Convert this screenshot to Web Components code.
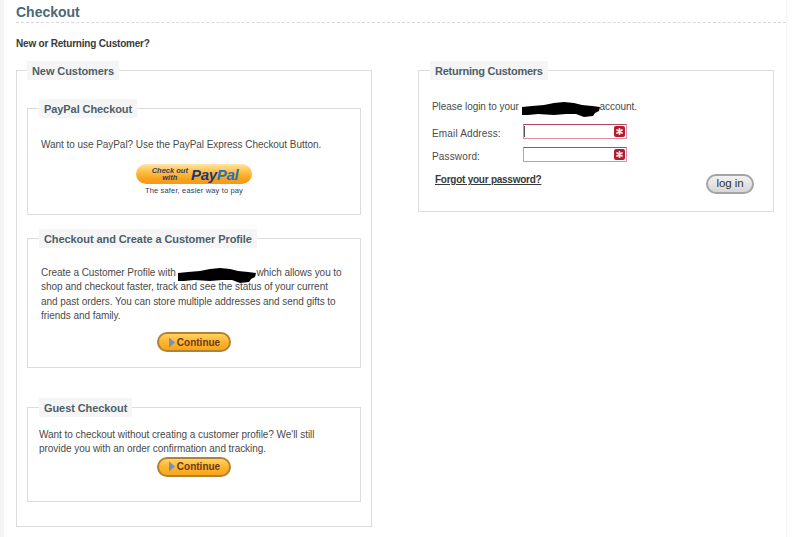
<!DOCTYPE html>
<html>
<head>
<meta charset="utf-8">
<title>Checkout</title>
<style>
html, body { margin: 0; padding: 0; background: #fff; }
body { font-family: "Liberation Sans", Arial, sans-serif; color: #4a4a4a; height: 537px; overflow: hidden; }
</style>
</head>
<body>
<checkout-page></checkout-page>

<script>
// legend box used for every group on the page
class GroupBox extends HTMLElement {
	constructor() {
		super();
		this.attachShadow({ mode: 'open' });
		this.shadowRoot.innerHTML = `
			<style>
			:host { display: block; }
			fieldset {
				margin: 0;
				min-width: 0;
				height: var(--box-height, auto);
				box-sizing: border-box;
				border: 1px solid #dcdcdc;
				padding: var(--box-padding, 0);
			}
			legend {
				margin-left: var(--legend-left, 0);
				padding: 0 5px;
				height: 19px;
				line-height: 21px;
				background: #f5f5f5;
				color: #4d6069;
				font-size: 11px;
				font-weight: bold;
				letter-spacing: var(--legend-spacing, -0.08px);
				white-space: nowrap;
			}
			</style>
			<fieldset>
				<legend part="legend"></legend>
				<slot></slot>
			</fieldset>
		`;
	}

	connectedCallback() {
		this.shadowRoot.querySelector('legend').textContent = this.getAttribute('label');
	}
}

// black marker scribble over the shop name
class RedactBlob extends HTMLElement {
	constructor() {
		super();
		this.attachShadow({ mode: 'open' });
		this.shadowRoot.innerHTML = `
			<style>
			:host { display: inline-block; vertical-align: -4px; line-height: 0; margin: -3px 0; }
			svg { display: block; }
			</style>
			<svg width="78" height="15" viewBox="0 0 78 15">
				<path fill="#000" d="M0 5 L10 4 L22 3 L32 1 L42 0 L52 1 L60 3 L70 4 L78 5 L77 9 L73 11 L71 14 L62 15 L54 12 L44 12 L32 13 L16 12 L6 13 L0 13 Z"/>
			</svg>
		`;
	}
}

class PaypalButton extends HTMLElement {
	constructor() {
		super();
		this.attachShadow({ mode: 'open' });
		this.shadowRoot.innerHTML = `
			<style>
			:host { display: flex; flex-direction: column; align-items: center; }
			.pill {
				width: 116px;
				height: 20px;
				box-sizing: border-box;
				border-radius: 10px;
				background: linear-gradient(#ffe6a8 0, #ffc34d 35%, #f9a11b 75%, #f59b14 100%);
				display: flex;
				align-items: center;
				justify-content: center;
				gap: 3px;
				padding-left: 2px;
			}
			.small {
				font-size: 7.5px;
				line-height: 7.5px;
				font-weight: bold;
				font-style: italic;
				color: #30405f;
				text-align: center;
				white-space: nowrap;
			}
			.brand {
				font-size: 15px;
				font-weight: bold;
				font-style: italic;
				color: #17377f;
				letter-spacing: -0.3px;
			}
			.brand span { color: #1f74b8; }
			.tag {
				margin-top: 2px;
				font-size: 7.5px;
				line-height: 9px;
				letter-spacing: 0.15px;
				color: #2b3d5e;
			}
			</style>
			<div class="pill">
				<div class="small">Check out<br>with</div>
				<div class="brand">Pay<span>Pal</span></div>
			</div>
			<div class="tag">The safer, easier way to pay</div>
		`;
	}
}

class ContinueButton extends HTMLElement {
	constructor() {
		super();
		this.attachShadow({ mode: 'open' });
		this.shadowRoot.innerHTML = `
			<style>
			:host { display: flex; justify-content: center; }
			.btn {
				width: 74px;
				height: 20px;
				box-sizing: border-box;
				border: 2px solid #b08334;
				border-radius: 10px;
				background: linear-gradient(#ffd262 0, #ffb52e 50%, #f9a51c 100%);
				display: flex;
				align-items: center;
				justify-content: center;
				gap: 1px;
				font-size: 10px;
				font-weight: bold;
				color: #6a3b1e;
			}
			svg { display: block; }
			</style>
			<div class="btn">
				<svg width="8" height="11" viewBox="0 0 8 11"><path d="M1 0.5 L7 5.5 L1 10.5 Z" fill="#6d93c4"/></svg>
				<span>Continue</span>
			</div>
		`;
	}
}

class RequiredInput extends HTMLElement {
	constructor() {
		super();
		this.attachShadow({ mode: 'open' });
		this.shadowRoot.innerHTML = `
			<style>
			:host { display: block; }
			.field {
				position: relative;
				width: 104px;
				height: 15px;
				box-sizing: border-box;
				border: 1px solid #e08fa2;
				border-top-color: #b5475f;
				background: #fff;
			}
			.caret {
				position: absolute;
				left: 0;
				top: 1px;
				width: 1px;
				height: 11px;
				background: #555;
				display: none;
			}
			:host([focused]) .caret { display: block; }
			.star {
				position: absolute;
				right: 1px;
				top: 1px;
				width: 11px;
				height: 11px;
				border-radius: 2px;
				background: #b01c30;
				display: flex;
				align-items: center;
				justify-content: center;
			}
			</style>
			<div class="field">
				<div class="caret"></div>
				<div class="star">
					<svg width="7" height="7" viewBox="0 0 7 7" stroke="#fbe6e6" stroke-width="1.7" stroke-linecap="round">
						<path d="M3.5 0.8 V6.2 M1 2 L6 5 M6 2 L1 5"/>
					</svg>
				</div>
			</div>
		`;
	}
}

class LoginButton extends HTMLElement {
	constructor() {
		super();
		this.attachShadow({ mode: 'open' });
		this.shadowRoot.innerHTML = `
			<style>
			:host { display: block; }
			.btn {
				width: 48px;
				height: 20px;
				box-sizing: border-box;
				border: 2px solid #a4a4a4;
				border-radius: 10px;
				background: linear-gradient(#f2f2f2, #d6d6d6);
				font-size: 11.5px;
				line-height: 15px;
				text-align: center;
				color: #333;
			}
			</style>
			<div class="btn">log in</div>
		`;
	}
}

class LoginForm extends HTMLElement {
	constructor() {
		super();
		this.attachShadow({ mode: 'open' });
		this.shadowRoot.innerHTML = `
			<style>
			:host { display: block; font-size: 10px; color: #4a4a4a; letter-spacing: -0.05px; }
			.intro { margin: 0; height: 13px; line-height: 13px; white-space: nowrap; }
			.rows { margin-top: 11px; display: grid; grid-template-columns: 91px auto; row-gap: 8px; justify-content: start; align-items: center; }
			.rows span { margin-top: 4px; line-height: 11px; letter-spacing: 0.15px; }
			.bottom { margin-top: 12px; padding-left: 3px; padding-right: 6px; display: flex; justify-content: space-between; }
			a { color: #3a3a3a; font-weight: bold; text-decoration: underline; line-height: 12px; letter-spacing: -0.25px; }
			</style>
			<p class="intro">Please login to your <redact-blob></redact-blob>account.</p>
			<div class="rows">
				<span>Email Address:</span><required-input focused></required-input>
				<span>Password:</span><required-input></required-input>
			</div>
			<div class="bottom">
				<a>Forgot your password?</a>
				<login-button></login-button>
			</div>
		`;
	}
}

class CheckoutPage extends HTMLElement {
	constructor() {
		super();
		this.attachShadow({ mode: 'open' });
		this.shadowRoot.innerHTML = `
			<style>
			:host {
				display: block;
				box-sizing: border-box;
				height: 537px;
				padding: 0 26px 0 16px;
				font-size: 10px;
				color: #4a4a4a;
				position: relative;
			}
			:host::before, :host::after {
				content: '';
				position: absolute;
				top: 0;
				bottom: 0;
				background: #f4f4f4;
			}
			:host::before { left: 0; width: 4px; }
			:host::after { right: 0; width: 14px; background: linear-gradient(90deg, #f1f1f1, #fff 2px); }
			h1 {
				margin: 0;
				padding-top: 4px;
				height: 18px;
				line-height: 17px;
				font-size: 14px;
				color: #4d6874;
				font-weight: bold;
			}
			.rule { height: 0; border-top: 1px dashed #d9d9d9; margin-right: -12px; }
			h2 {
				margin: 14px 0 0;
				height: 13px;
				line-height: 13px;
				font-size: 10px;
				font-weight: bold;
				letter-spacing: -0.2px;
				color: #3a3a3a;
			}
			.cols {
				margin-top: 11px;
				display: grid;
				grid-template-columns: 356px 356px;
				column-gap: 46px;
				align-items: start;
			}
			.text { margin: 0; line-height: 14.3px; letter-spacing: -0.05px; }
			.new { --box-height: 466px; --box-padding: 19px 10px 0; }
			.one { --box-height: 116px; --box-padding: 20px 13px 0; --legend-left: -2px; }
			.two { --box-height: 139px; margin-top: 14px; --box-padding: 18px 13px 0; --legend-left: -2px; }
			.three { --box-height: 104px; margin-top: 30px; --box-padding: 11px 11px 0; --legend-left: 0px; }
			.two continue-button { margin-top: 9px; }
			.one paypal-button { margin-top: 12px; }
			.three continue-button { margin-top: 0; }
			.ret { --box-height: 151px; --box-padding: 20px 13px 0; --legend-left: -2px; --legend-spacing: -0.25px; }
			</style>
			<h1>Checkout</h1>
			<div class="rule"></div>
			<h2>New or Returning Customer?</h2>
			<div class="cols">
				<group-box class="new" label="New Customers">
					<group-box class="one" label="PayPal Checkout">
						<p class="text">Want to use PayPal? Use the PayPal Express Checkout Button.</p>
						<paypal-button></paypal-button>
					</group-box>
					<group-box class="two" label="Checkout and Create a Customer Profile">
						<p class="text">Create a Customer Profile with <redact-blob></redact-blob>which allows you to shop and checkout faster, track and see the status of your current and past orders. You can store multiple addresses and send gifts to friends and family.</p>
						<continue-button></continue-button>
					</group-box>
					<group-box class="three" label="Guest Checkout">
						<p class="text">Want to checkout without creating a customer profile? We'll still provide you with an order confirmation and tracking.</p>
						<continue-button></continue-button>
					</group-box>
				</group-box>
				<group-box class="ret" label="Returning Customers">
					<login-form></login-form>
				</group-box>
			</div>
		`;
	}
}

customElements.define('group-box', GroupBox);
customElements.define('redact-blob', RedactBlob);
customElements.define('paypal-button', PaypalButton);
customElements.define('continue-button', ContinueButton);
customElements.define('required-input', RequiredInput);
customElements.define('login-button', LoginButton);
customElements.define('login-form', LoginForm);
customElements.define('checkout-page', CheckoutPage);
</script>
</body>
</html>
